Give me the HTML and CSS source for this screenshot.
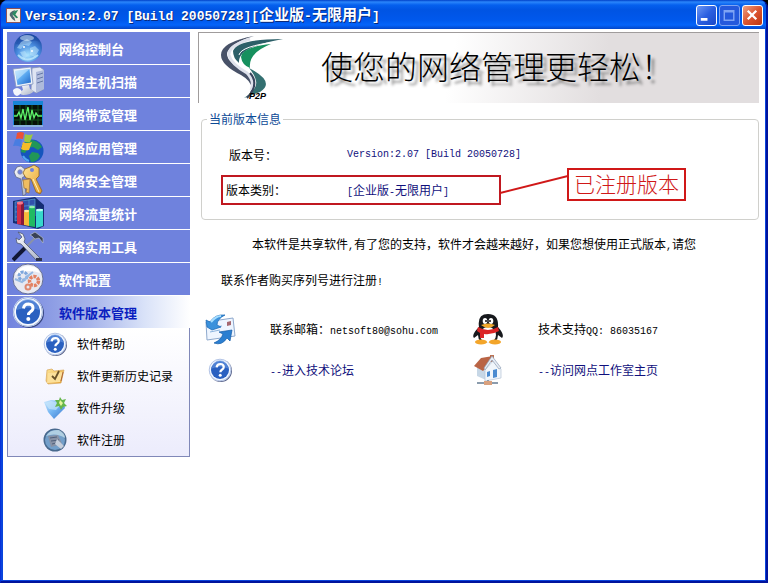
FILE: index.html
```
<!DOCTYPE html>
<html lang="zh-CN">
<head>
  <meta charset="UTF-8">
  <meta name="viewport" content="width=device-width, initial-scale=1">
  <title>Version:2.07 [Build 20050728][企业版-无限用户]</title>
  <link rel="stylesheet" href="styles.css">
</head>
<body>

  <!-- shared icon shapes -->
  <svg class="defs" width="0" height="0" aria-hidden="true">
    <defs>
      <radialGradient id="globe" cx=".5" cy=".75" r=".75">
        <stop offset="0" stop-color="#a9e4ff"/><stop offset=".5" stop-color="#4a8ee0"/><stop offset="1" stop-color="#17409c"/>
      </radialGradient>
      <linearGradient id="blue" x1="0" y1="0" x2="1" y2="1">
        <stop offset="0" stop-color="#c8e8ff"/><stop offset=".5" stop-color="#5aa8f0"/><stop offset="1" stop-color="#1d62c4"/>
      </linearGradient>
      <linearGradient id="silver" x1="0" y1="0" x2="1" y2="1">
        <stop offset="0" stop-color="#fff"/><stop offset="1" stop-color="#a9b2c6"/>
      </linearGradient>
      <linearGradient id="gold" x1="0" y1="0" x2="1" y2="1">
        <stop offset="0" stop-color="#ffe79a"/><stop offset="1" stop-color="#e39a25"/>
      </linearGradient>
      <symbol id="question" viewBox="0 0 32 32">
        <circle cx="17" cy="17" r="15" fill="#1b2a60" opacity=".75"/>
        <circle cx="16" cy="16" r="15" fill="#f4f8ff"/>
        <circle cx="16" cy="16" r="14.4" fill="none" stroke="#9db3dc"/>
        <circle cx="16" cy="16" r="12" fill="#2a60c0"/>
        <path d="M5 14a11 11 0 0 1 22 0q-11-5-22 0z" fill="#6b9ae2" opacity=".6"/>
        <path d="M11.500 12.500q.5-4.500 5-4.500 4.500.2 4.500 4 0 2.200-2.500 3.700-2 1.300-2 3.300" fill="none" stroke="#fff" stroke-width="3"/>
        <circle cx="16.300" cy="23" r="2" fill="#fff"/>
      </symbol>
    </defs>
  </svg>

  <div class="window">
    <header class="titlebar">
      <svg class="app-icon" viewBox="0 0 16 16" aria-hidden="true">
        <rect x=".5" y=".5" width="15" height="15" fill="#f5efe6" stroke="#8d4d50"/>
        <path d="M10 2Q3 4 4 8q2 4 6 6l-1-4Q5 8 10 2z" fill="#4f6a70"/>
        <path d="M13 2Q6 3 7 7l4 4 2-1-3-3z" fill="#2d8a62"/>
      </svg>
      <h1 class="title">Version:2.07 [Build 20050728][<span class="title-cn">企业版</span>-<span class="title-cn">无限用户</span>]</h1>
      <div class="controls">
        <button class="control" type="button" aria-label="最小化">
          <svg viewBox="0 0 20 20"><path d="M4 14h7" stroke="#fff" stroke-width="3"/></svg>
        </button>
        <button class="control disabled" type="button" aria-label="最大化" disabled>
          <svg viewBox="0 0 20 20"><path d="M4.500 5h10v10h-10zM4 6h11" fill="none" stroke="#7fa4f4" stroke-width="1.500"/></svg>
        </button>
        <button class="control close" type="button" aria-label="关闭">
          <svg viewBox="0 0 20 20"><path d="M5 5l9 9M14 5l-9 9" stroke="#fff" stroke-width="2.400"/></svg>
        </button>
      </div>
    </header>

    <div class="client">
      <nav class="sidebar">
        <button class="menu-item" type="button">
          <svg class="menu-icon" viewBox="0 0 32 32">
            <circle cx="16" cy="16" r="14" fill="url(#globe)"/>
            <path d="M4 12q3-9 12-10 8 0 12 8-5-3-10 0-7 4-14 2z" fill="#1d4da6" opacity=".55"/>
            <path d="M9 10l6-3 5 3-3 4-5-1-3 4-4-1zM18 16l5-2 4 4-4 7-5-2zM8 20l5-1 3 5-4 3z" fill="#b9e4fb" opacity=".55"/>
            <ellipse cx="15" cy="6" rx="7" ry="3" fill="#e8f7ff" opacity=".5"/>
            <path d="M6 23q9 9 20 0" fill="none" stroke="#c9f1ff" stroke-width="2" opacity=".7"/>
            <circle cx="12" cy="15" r="1" fill="#fff"/><circle cx="20" cy="19" r="1" fill="#fff"/>
          </svg>
          网络控制台
        </button>
        <button class="menu-item" type="button">
          <svg class="menu-icon" viewBox="0 0 32 32">
            <path d="M20 3l8-1 4 3v19l-8 4-5-3z" fill="#dfe5f2" stroke="#8492b4" stroke-width=".8"/>
            <path d="M24 7v21l8-4V5z" fill="#aebadb"/>
            <path d="M25 10l6-2M25 14l6-2M25 18l6-2" stroke="#6679a6"/>
            <path d="M1 4l18-2 2 17-17 3z" fill="#eef3fa" stroke="#8296bf" stroke-width=".8"/>
            <path d="M3 6l14.500-2 1.500 13.500L5.500 20z" fill="url(#blue)"/>
            <path d="M3 6l14.500-2L5 15z" fill="#c6eaff" opacity=".6"/>
            <path d="M10 21l7-1 1 4 4 2q-3 4-11 4-4-1-4-3l4-2z" fill="url(#silver)"/>
            <path d="M1 25q4-4 8 0 1 4-4 6-4-1-4-6z" fill="#f3f5fb"/>
          </svg>
          网络主机扫描
        </button>
        <button class="menu-item" type="button">
          <svg class="menu-icon" viewBox="0 0 32 32">
            <path d="M1 3h30v26H1z" fill="#1684d5"/>
            <path d="M2 7h28v20H2z" fill="#061008"/>
            <path d="M2 12h28M2 17h28M2 22h28M8 7v20M14 7v20M20 7v20M26 7v20" stroke="#14521c"/>
            <path d="M2 18h3l2-4 2 6 2-9 2 11 3-13 2 13 2-10 2 8 2-5 2 3h4" fill="none" stroke="#5df06a" stroke-width="1.300"/>
            <path d="M1 28h30" stroke="#8ab1dc" stroke-width="2"/>
          </svg>
          网络带宽管理
        </button>
        <button class="menu-item" type="button">
          <svg class="menu-icon" viewBox="0 0 32 32">
            <circle cx="20" cy="20" r="11.500" fill="#1555bd"/>
            <path d="M18 9q8 0 12 7l-4 3-5-3-5 1-3 5-4-1q1-9 9-12zM20 21l6 1 2 3q-3 6-9 6l-2-6z" fill="#219758"/>
            <path d="M11 25q2 4 6 5" stroke="#52a5f1" stroke-width="2" fill="none"/>
            <path d="M5 2q4-2 7 0l-1 6q-4-1-7 0z" fill="#ed5134"/>
            <path d="M13 3q4 2 8 0l-3 8q-4 1-6-1z" fill="#9bc841"/>
            <path d="M3 9q3-2 7 0l-1 7q-4-2-8-1z" fill="#497de1"/>
            <path d="M11 11q4 2 9 0l-3 8q-5 1-8-1z" fill="#f5bd28"/>
          </svg>
          网络应用管理
        </button>
        <button class="menu-item" type="button">
          <svg class="menu-icon" viewBox="0 0 32 32">
            <path d="M9 2l5 4-1 6-3 2 3 8 1 8-3 2-2-17-5-2-2-5 3-5z" fill="url(#silver)" stroke="#626987" stroke-width=".8"/>
            <circle cx="8" cy="8" r="2.300" fill="#6f82dc" stroke="#858dac" stroke-width=".7"/>
            <path d="M18 3l4-2 5 3v8l-3 3 6 12-2 3-4-2-5-13-5-1-3-5 2-4z" fill="url(#gold)" stroke="#8c6223" stroke-width=".8"/>
            <circle cx="20" cy="6" r="2" fill="#6f82dc"/>
            <path d="M21 15l6 13" stroke="#fff0bc"/>
            <path d="M11 16l7-1-1 14-3-1 1-3-3-1z" fill="#efbd60" stroke="#a57431" stroke-width=".7"/>
          </svg>
          网络安全管理
        </button>
        <button class="menu-item" type="button">
          <svg class="menu-icon" viewBox="0 0 32 32">
            <path d="M1 4l22-4 9 8v21l-6 3-25-6z" fill="#152d73"/>
            <path d="M3 5l20-3v17L3 24zM3 10l20-2M3 15l20-2M3 20l20-2M10 4v18M17 3v17" fill="#3150ac" stroke="#57a0d1" stroke-width=".7"/>
            <path d="M5 6l6-2v24l-6-1z" fill="#d02e48"/><path d="M9 5l3 1v22H9z" fill="#861a3b"/><ellipse cx="8" cy="6" rx="3" ry="1.500" fill="#f5788b"/>
            <path d="M12 15l5-2v16l-5-1z" fill="#f6bb3a"/><ellipse cx="14.500" cy="14" rx="2.500" ry="1.200" fill="#ffe6a1"/>
            <path d="M17 10l6-1v21l-6-1z" fill="#20ba62"/><ellipse cx="20" cy="10" rx="3" ry="1.300" fill="#95edb2"/>
            <path d="M24 13l7-1v17l-7 2z" fill="#36d8cb"/><ellipse cx="27.500" cy="13" rx="3.500" ry="1.300" fill="#b9fff1"/>
          </svg>
          网络流量统计
        </button>
        <button class="menu-item" type="button">
          <svg class="menu-icon" viewBox="0 0 32 32">
            <path d="M24 7L13 18" stroke="#8a92a7" stroke-width="2"/>
            <path d="M14 17L1 30" stroke="#111735" stroke-width="4"/>
            <path d="M18 5l5-3 4 3 4 3v5l-4-5-4 1-3-3z" fill="#394256" stroke="#b2bac8" stroke-width=".7"/>
            <path d="M6 2l5 2 2 5-1 3 16 16-3 3L9 14l-4-1-1-5 3 2 3-3z" fill="url(#silver)" stroke="#515b75" stroke-width=".8"/>
            <path d="M24 28h6v3h-6z" fill="#2d334b"/>
          </svg>
          网络实用工具
        </button>
        <button class="menu-item" type="button">
          <svg class="menu-icon" viewBox="0 0 32 32">
            <circle cx="16" cy="16" r="15" fill="#e7e9f2" stroke="#687195"/>
            <path d="M3 12Q9 0 22 4q4 1 6 6-12-5-25 2z" fill="#fff"/>
            <circle cx="11" cy="13" r="4" fill="none" stroke="#7da6dc" stroke-width="3" stroke-dasharray="3 1"/>
            <path d="M3 16l7 3 7-7 4-3" fill="none" stroke="#96b9e3" stroke-width="2"/>
            <circle cx="22" cy="18" r="4.500" fill="none" stroke="#e38263" stroke-width="3.500" stroke-dasharray="3 1"/>
            <circle cx="16" cy="24" r="2.500" fill="none" stroke="#df886e" stroke-width="2"/>
          </svg>
          软件配置
        </button>
        <button class="menu-item active" type="button" aria-expanded="true">
          <svg class="menu-icon"><use href="#question"/></svg>
          软件版本管理
        </button>
        <div class="submenu">
          <a class="submenu-item" href="#help">
            <svg class="submenu-icon"><use href="#question"/></svg>
            软件帮助
          </a>
          <a class="submenu-item" href="#history">
            <svg class="submenu-icon" viewBox="0 0 24 24">
              <path d="M4 6l5-1 2 2 10-1-3 13-13 1-2-3z" fill="url(#gold)" stroke="#d5a65c" stroke-width=".7"/>
              <path d="M5 9l15-1-3 10-13 1z" fill="#fce09a"/>
              <path d="M9 12l3 3 4-8" fill="none" stroke="#695127" stroke-width="1.800"/>
              <path d="M18 17l2-9" stroke="#ac6638"/>
            </svg>
            软件更新历史记录
          </a>
          <a class="submenu-item" href="#upgrade">
            <svg class="submenu-icon" viewBox="0 0 24 24">
              <path d="M1 6l7-2 12 1 2 7-5 5-6 6-6-7z" fill="url(#blue)" opacity=".85"/>
              <path d="M2 7l6-2 8 2 4-1-7 8-7-1z" fill="#c6e5fb" opacity=".7"/>
              <path d="M17 1l2 3 4-1-2 4 3 3-4 1-2 3-2-4-4 1 2-4-2-3h4z" fill="#65b64b"/>
              <path d="M17 4l3 3-2 3-2-3z" fill="#e5f59b"/>
            </svg>
            软件升级
          </a>
          <a class="submenu-item" href="#register">
            <svg class="submenu-icon" viewBox="0 0 24 24">
              <circle cx="12" cy="12" r="11.500" fill="#48698e"/>
              <circle cx="12" cy="12" r="10" fill="#739fca"/>
              <path d="M3 8q4-7 13-6 6 3 6 8-9-6-19-2z" fill="#bfdbe8" opacity=".8"/>
              <path d="M5 8l10-1 4 9-11 3z" fill="#8791a5"/>
              <path d="M7 10l7-1M8 13l8-1M9 16l8-2" stroke="#50607c"/>
              <path d="M14 11l7 7-3 3-6-5z" fill="#c5cedc"/>
            </svg>
            软件注册
          </a>
        </div>
      </nav>

      <main class="content">
        <div class="banner">
          <svg class="logo" viewBox="0 0 70 70" role="img" aria-label="P2P">
            <path d="M37 3Q4 9 4 22 4 32 24 42q17 10 6 22 14-13 1-24Q10 30 10 21 11 11 37 3z" fill="#485268"/>
            <path d="M33 6Q11 13 12 22q2 9 18 18 8 8 4 17" fill="none" stroke="#dfe2ec" stroke-width="3"/>
            <path d="M66 6Q20 6 16 18q0 7 6 12-2-16 44-24z" fill="#2c5f68"/>
            <path d="M59 9Q24 13 22 22" fill="none" stroke="#fff" stroke-width="1"/>
            <path d="M54 11Q25 14 24 24q1 8 9 11-2-15 21-24z" fill="#16905e"/>
            <path d="M32 35q27 14 11 24L27 65q14-9 12-17-1-6-7-13z" fill="#347071"/>
            <path d="M33 40q10 11-3 25" fill="none" stroke="#38445d" stroke-width="2"/>
            <text class="logo-text" x="32" y="66">P2P</text>
          </svg>
          <p class="slogan">使您的网络管理更轻松！</p>
        </div>

        <fieldset class="version">
          <legend>当前版本信息</legend>
          <div class="version-rows">
            <div class="version-row">
              <span class="version-label">版本号：</span>
              <span class="version-value mono">Version:2.07 [Build 20050728]</span>
            </div>
            <div class="version-row marked">
              <span class="version-label">版本类别：</span>
              <span class="version-value"><span class="mono">[</span>企业版<span class="mono">-</span>无限用户<span class="mono">]</span></span>
            </div>
            <svg class="pointer" viewBox="0 0 68 22" aria-hidden="true">
              <path d="M0 19L68 2" stroke="#d01818" stroke-width="2"/>
            </svg>
            <div class="callout">已注册版本</div>
          </div>
        </fieldset>

        <p class="notice">本软件是共享软件<span class="mono">,</span>有了您的支持，软件才会越来越好，如果您想使用正式版本<span class="mono">,</span>请您<br>联系作者购买序列号进行注册<span class="mono">!</span></p>

        <div class="contacts">
          <svg class="contact-icon" viewBox="0 0 32 32" aria-hidden="true">
            <path d="M2 9l27-4 2 18-28 4z" fill="#eef5ff" stroke="#8ea9cd"/>
            <path d="M6 15l12-2M6 19l10-2" stroke="#8db5df"/>
            <path d="M23 9l4-1v4l-4 1z" fill="#a66870"/>
            <path d="M3 14L2 7 6 9q5-8 15-7-8 4-8 10l4 2-9 3z" fill="#3a91dc" stroke="#1765b5" stroke-width=".7"/>
            <path d="M28 17l-2 11-3-3q-5 8-13 5 7-3 9-9l-4-2z" fill="#2b7fd1" stroke="#145ca8" stroke-width=".7"/>
            <path d="M7 9q5-6 10-6" stroke="#a5ddff" stroke-width="2" fill="none"/>
          </svg>
          <p class="contact-text">联系邮箱：<span class="mono">netsoft80@sohu.com</span></p>
          <svg class="contact-icon" viewBox="0 0 32 32" aria-hidden="true">
            <path d="M7 14Q5 1 16 1t10 13q7 8 4 11l-4-3q0 8-10 8T6 22l-4 3q-3-3 5-11z" fill="#17191d"/>
            <ellipse cx="16" cy="22" rx="8" ry="8" fill="#fff"/>
            <ellipse cx="13" cy="8" rx="2.300" ry="3" fill="#fff"/><ellipse cx="19" cy="8" rx="2.300" ry="3" fill="#fff"/>
            <circle cx="14" cy="8" r="1" fill="#111"/><circle cx="18" cy="8" r="1" fill="#111"/>
            <path d="M9 12q7-3 14 0-7 6-14 0z" fill="#f1a92c"/>
            <path d="M6 14q10 6 20 0l1 4q-7 4-15 3v4H8v-5l-3-2z" fill="#db2526"/>
            <ellipse cx="9" cy="29" rx="6" ry="2.500" fill="#f3a52a"/><ellipse cx="23" cy="29" rx="6" ry="2.500" fill="#f3a52a"/>
          </svg>
          <p class="contact-text">技术支持<span class="mono">QQ: 86035167</span></p>

          <svg class="contact-icon small" aria-hidden="true"><use href="#question"/></svg>
          <a class="contact-link" href="#forum"><span class="mono">--</span>进入技术论坛</a>
          <svg class="contact-icon" viewBox="0 0 32 32" aria-hidden="true">
            <path d="M18 1h4v7h-4z" fill="#bc7352"/>
            <path d="M5 13l9 4v9l-9-4z" fill="#c7d7e6"/>
            <path d="M13 16l8-9 8 8v9l-16 3z" fill="#f1f6fb" stroke="#b4c3d6" stroke-width=".7"/>
            <path d="M2 12L9 4l12-2-7 12-3 3z" fill="#b96445"/>
            <path d="M20 2l9 12-2 1-7-9-7 10-1-2z" fill="#e8edf5" stroke="#8f9fb4" stroke-width=".7"/>
            <path d="M15 18l3-1v5l-3 1zM21 16l4-1v8l-4 1z" fill="#4b8bd0"/>
            <path d="M16 26v4M5 29h21" stroke="#8b9cad" stroke-width="2"/><path d="M12 27h8v4h-8z" fill="#d9a17e"/>
          </svg>
          <a class="contact-link" href="#home"><span class="mono">--</span>访问网点工作室主页</a>
        </div>
      </main>
    </div>
  </div>

</body>
</html>
```

FILE: styles.css
```
* {
  box-sizing: border-box;
}

body {
  margin: 0;
  background: #000;
  color: #000;
  font-family: "Noto Sans CJK SC", sans-serif;
  font-size: 12px;
  line-height: 18px;
}

button {
  font-family: inherit;
}

p {
  margin: 0;
}

a {
  color: inherit;
  text-decoration: none;
}

.defs {
  position: absolute;
}

.mono {
  font-family: "Liberation Mono", monospace;
  font-size: 10px;
  line-height: 12px;
}

.window {
  display: flex;
  flex-direction: column;
  min-height: 100vh;
  border-left: 1px solid #0831d9;
  border-right: 2px solid #00139c;
  border-bottom: 2px solid #00139c;
  background: #0a44dc;
  border-radius: 8px 8px 0 0;
  overflow: hidden;
}

/* title bar */
.titlebar {
  display: flex;
  align-items: center;
  height: 29px;
  padding: 2px 3px 0 5px;
  background: linear-gradient(#0040c8, #2b86fb 2px, #0560ee 5px, #0054e3 10px, #0058ec 20px, #0464fa 25px, #0346c8);
}

.app-icon {
  width: 15px;
  height: 15px;
}

.title {
  flex: 1;
  margin: 0;
  padding-left: 4px;
  color: #fff;
  font-family: "Liberation Mono", "Noto Sans CJK SC", monospace;
  font-size: 13px;
  font-weight: bold;
  text-shadow: 1px 1px 0 #0a2a7a;
  white-space: nowrap;
}

.title-cn {
  font-family: "Noto Sans CJK SC", sans-serif;
  font-size: 15px;
}

.controls {
  display: flex;
  gap: 2px;
}

.control {
  width: 21px;
  height: 21px;
  padding: 0;
  border: 1px solid #fff;
  border-radius: 3px;
  background: linear-gradient(135deg, #6d98f4, #2b5fe0 50%, #1a48c8);
}

.control svg {
  display: block;
}

.control.disabled {
  border-color: #7ea3f2;
  background: #2559dc;
}

.control.close {
  background: linear-gradient(135deg, #eea083, #dc5530 50%, #bd3510);
}

/* client area */
.client {
  flex: 1;
  display: grid;
  grid-template-columns: 183px 1fr;
  gap: 8px;
  align-items: start;
  margin: 0 1px 1px 2px;
  padding: 3px 6px 0 4px;
  background: #fff;
}

.menu-item {
  display: flex;
  align-items: center;
  gap: 15px;
  width: 100%;
  height: 32px;
  margin-bottom: 1px;
  padding: 0 0 0 5px;
  border: 0;
  background: #6f82dd;
  color: #fff;
  font-size: 13px;
  font-weight: bold;
}

.menu-item.active {
  margin-bottom: 0;
  background: linear-gradient(90deg, #7183de, #a5b3ea 45%, #d9e2f8 75%, #fff);
  color: #0a1ec0;
}

.menu-icon {
  width: 32px;
  height: 32px;
}

.submenu {
  border: 1px solid #8088b8;
  border-top: 0;
  padding-left: 35px;
  background: linear-gradient(#fff, #ececfc);
}

.submenu-item {
  display: flex;
  align-items: center;
  gap: 10px;
  height: 32px;
}

.submenu-icon {
  width: 24px;
  height: 24px;
}

.banner {
  display: flex;
  align-items: center;
  height: 71px;
  padding-left: 18px;
  border-top: 1px solid #a09c9c;
  border-left: 1px solid #a09c9c;
  background: linear-gradient(100deg, #fff 45%, #e2dedf 72%);
}

.logo {
  width: 70px;
  height: 70px;
}

.logo-text {
  font: italic bold 9px "Liberation Sans", sans-serif;
}

.slogan {
  padding: 0 0 6px 34px;
  font-size: 32px;
  font-weight: 300;
  line-height: 48px;
  text-shadow: 4px 4px 3px #888;
  white-space: nowrap;
}

/* version info */
.version {
  min-width: 0;
  margin: 7px 0 0 3px;
  padding: 12px 0 14px 19px;
  border: 1px solid #d0d0cc;
  border-radius: 4px;
}

.version legend {
  margin-left: -14px;
  padding: 0 2px;
  color: #0c4a96;
}

.version-rows {
  position: relative;
}

.version-row {
  display: grid;
  grid-template-columns: 124px 1fr;
  align-items: center;
  width: 280px;
  height: 30px;
  margin-bottom: 5px;
  border: 2px solid transparent;
  white-space: nowrap;
}

.version-row.marked {
  margin-bottom: 0;
  border-color: #c01820;
}

.version-label {
  padding-left: 6px;
}

.marked .version-label {
  padding-left: 3px;
}

.version-value {
  color: #10107c;
}

.pointer {
  position: absolute;
  top: 34px;
  left: 279px;
  width: 68px;
  height: 22px;
}

.callout {
  position: absolute;
  top: 28px;
  left: 346px;
  padding: 0 5px 2px;
  border: 2px solid #d01818;
  color: #d01818;
  font-size: 21px;
  font-weight: 300;
  line-height: 27px;
}

.notice {
  padding: 6px 0 0 23px;
  line-height: 36px;
  text-indent: 31px;
}

/* contacts */
.contacts {
  display: grid;
  grid-template-columns: 32px 168px 32px auto;
  grid-auto-rows: 41px;
  column-gap: 34px;
  align-items: center;
  justify-content: start;
  padding: 10px 0 0 6px;
  white-space: nowrap;
}

.contact-icon {
  width: 32px;
  height: 32px;
}

.contact-icon.small {
  justify-self: center;
  width: 24px;
  height: 24px;
}

.contact-link {
  color: #10107c;
}
```
